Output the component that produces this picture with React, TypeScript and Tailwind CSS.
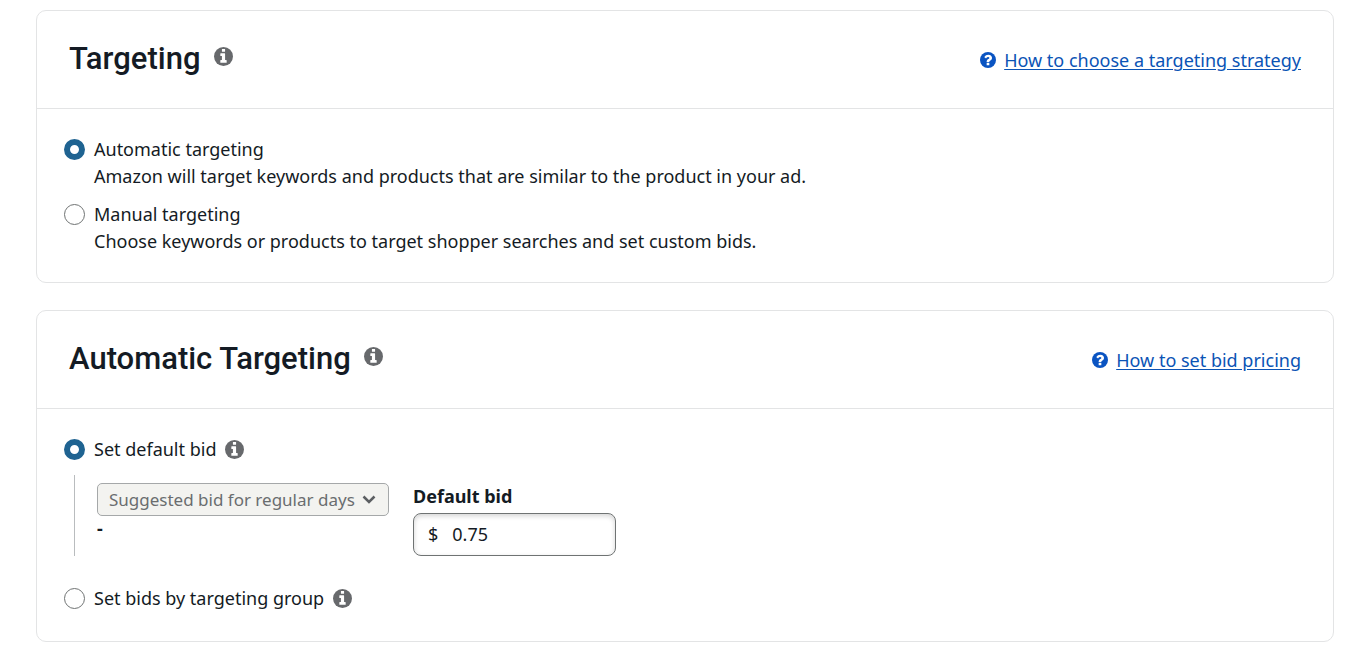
import { useState, type ReactNode } from 'react';

const radioClass =
  "size-[21px] shrink-0 appearance-none rounded-full border border-[#6f7373] bg-white checked:border-[6px] checked:border-[#1f6391]";

function InfoIcon() {
  return (
    <svg viewBox="0 128 1536 1536" aria-hidden="true" className="size-[19px]">
      <circle cx="768" cy="896" r="768" fill="currentColor" />
      <path
        fill="#fff"
        d="M1024 1376v-160q0-14-9-23t-23-9h-96v-512q0-14-9-23t-23-9h-320q-14 0-23 9t-9 23v160q0 14 9 23t23 9h96v320h-96q-14 0-23 9t-9 23v160q0 14 9 23t23 9h448q14 0 23-9t9-23zM896 480v-160q0-14-9-23t-23-9h-192q-14 0-23 9t-9 23v160q0 14 9 23t23 9h192q14 0 23-9t9-23z"
      />
    </svg>
  );
}

function HelpIcon() {
  return (
    <svg viewBox="0 128 1536 1536" aria-hidden="true" className="size-4">
      <circle cx="768" cy="896" r="768" fill="currentColor" />
      <path
        fill="#fff"
        d="M896 1376v-192q0-14-9-23t-23-9h-192q-14 0-23 9t-9 23v192q0 14 9 23t23 9h192q14 0 23-9t9-23zM1152 704q0-88-55.5-163t-138.5-116-170-41q-243 0-371 213-15 24 8 42l132 100q7 6 19 6 16 0 25-12 53-68 86-92 34-24 86-24 48 0 85.500 26t37.500 59q0 38-20 61t-68 45q-63 28-115.500 86.500t-52.500 125.500v36q0 14 9 23t23 9h192q14 0 23-9t9-23q0-19 21.500-49.500t54.500-49.500q32-18 49-28.500t46-35 44.500-48 28-60.500 12.500-81z"
      />
    </svg>
  );
}

function InfoButton({ label }: { label: string }) {
  return (
    <button type="button" aria-label={label} className="shrink-0 text-[#67696c]">
      <InfoIcon />
    </button>
  );
}

function Card({ title, link, children }: { title: string; link: string; children: ReactNode }) {
  return (
    <section className="rounded-[10px] border border-[#e3e4e5]">
      <header className="flex h-[98px] items-center justify-between border-b border-[#e3e4e5] px-8">
        <div className="flex items-center gap-[13px] pb-[2px]">
          <h2 className="font-['Roboto',sans-serif] text-[31px] leading-10 font-medium">{title}</h2>
          <div className="flex pb-1">
            <InfoButton label={`About ${title}`} />
          </div>
        </div>
        <div className="flex items-center gap-2 text-[#0a54c2]">
          <HelpIcon />
          <a href="#" className="pt-[2px] text-[#0b54b5] underline underline-offset-2">
            {link}
          </a>
        </div>
      </header>
      <div className="p-[27px]">{children}</div>
    </section>
  );
}

function TargetingOption(props: {
  id: string;
  title: string;
  description: string;
  checked: boolean;
  onSelect: () => void;
}) {
  return (
    <div className="flex items-start gap-[9px]">
      <div className="flex h-[27px] items-center">
        <input
          type="radio"
          name="targeting"
          id={props.id}
          checked={props.checked}
          onChange={props.onSelect}
          className={radioClass}
        />
      </div>
      <label htmlFor={props.id}>
        <span className="block">{props.title}</span>
        <span className="block">{props.description}</span>
      </label>
    </div>
  );
}

export default function App() {
  const [targeting, setTargeting] = useState('automatic');
  const [bidMode, setBidMode] = useState('default');
  const [bid, setBid] = useState('0.75');

  return (
    <main className="flex flex-col gap-[27px] bg-white pt-[10px] pr-[27px] pb-[7px] pl-9 font-['Noto_Sans',sans-serif] text-[18px] leading-[27px] text-[#141b24]">
      <Card title="Targeting" link="How to choose a targeting strategy">
        <div className="flex flex-col gap-[11px]">
          <TargetingOption
            id="targeting-automatic"
            title="Automatic targeting"
            description="Amazon will target keywords and products that are similar to the product in your ad."
            checked={targeting === 'automatic'}
            onSelect={() => setTargeting('automatic')}
          />
          <TargetingOption
            id="targeting-manual"
            title="Manual targeting"
            description="Choose keywords or products to target shopper searches and set custom bids."
            checked={targeting === 'manual'}
            onSelect={() => setTargeting('manual')}
          />
        </div>
      </Card>

      <Card title="Automatic Targeting" link="How to set bid pricing">
        <div className="flex items-center gap-[9px]">
          <input
            type="radio"
            name="bid-mode"
            id="bid-default"
            checked={bidMode === 'default'}
            onChange={() => setBidMode('default')}
            className={radioClass}
          />
          <div className="flex items-center gap-[9px]">
            <label htmlFor="bid-default">Set default bid</label>
            <InfoButton label="About default bid" />
          </div>
        </div>

        <div className="mt-3 mb-[29px] ml-[10px] flex items-start gap-6 border-l border-[#b9bcbe] pl-[22px]">
          <div className="pt-2">
            <div className="grid items-center">
              <select
                disabled
                aria-label="Suggested bid"
                className="col-start-1 row-start-1 h-[33px] w-[292px] appearance-none rounded-[5px] border border-[#a5a8a9] bg-[#f3f3f0] pl-[11px] text-[17px] text-[#6a6d6f] opacity-100"
              >
                <option>Suggested bid for regular days</option>
              </select>
              <svg
                viewBox="0 0 14 9"
                aria-hidden="true"
                className="pointer-events-none col-start-1 row-start-1 mr-[13px] h-[9px] w-[14px] justify-self-end"
              >
                <path d="M1.500 1.500 7 7l5.500-5.500" fill="none" stroke="#5c5f62" strokeWidth="2.500" />
              </svg>
            </div>
            <p className="leading-6 font-bold">-</p>
          </div>
          <div className="flex flex-col pt-2">
            <label htmlFor="bid-amount" className="mb-[3px] font-bold">
              Default bid
            </label>
            <div className="flex h-[43px] w-[203px] items-center gap-[14px] rounded-lg border border-[#6f7373] px-[14px] shadow-[inset_0_2px_5px_rgba(15,17,17,0.18)]">
              <span>$</span>
              <input
                id="bid-amount"
                type="text"
                inputMode="decimal"
                value={bid}
                onChange={(e) => setBid(e.target.value)}
                className="w-full min-w-0 bg-transparent outline-none"
              />
            </div>
          </div>
        </div>

        <div className="flex items-center gap-[9px] pb-[2px]">
          <input
            type="radio"
            name="bid-mode"
            id="bid-group"
            checked={bidMode === 'group'}
            onChange={() => setBidMode('group')}
            className={radioClass}
          />
          <div className="flex items-center gap-[9px]">
            <label htmlFor="bid-group">Set bids by targeting group</label>
            <InfoButton label="About bids by targeting group" />
          </div>
        </div>
      </Card>
    </main>
  );
}
